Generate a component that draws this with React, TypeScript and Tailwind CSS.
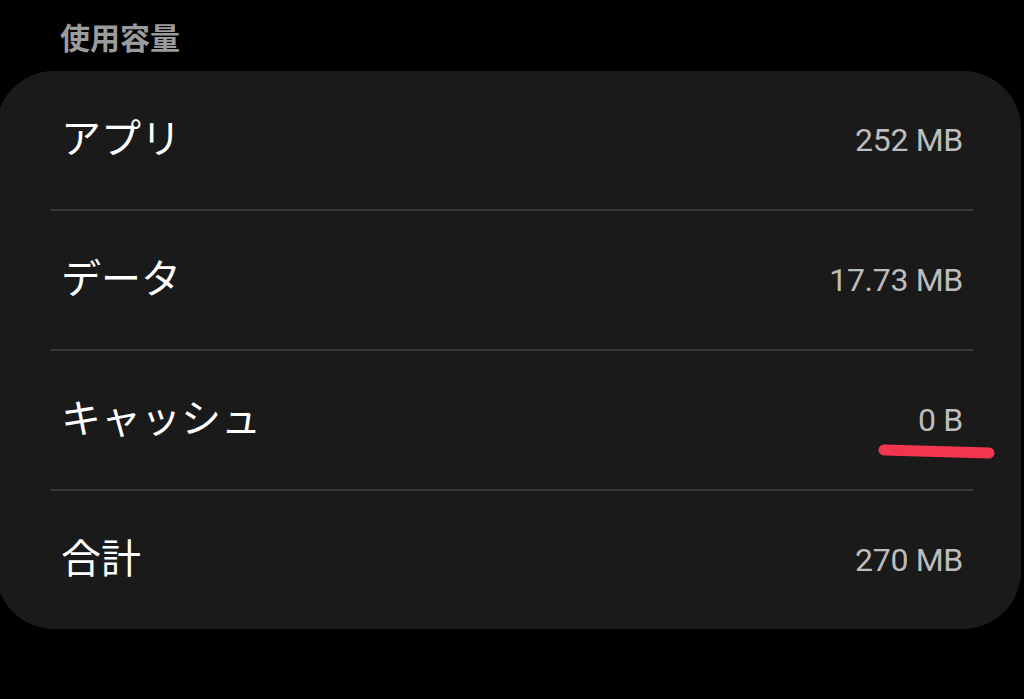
import React from 'react';

const rows = [
  { label: 'アプリ', value: '252 MB' },
  { label: 'データ', value: '17.73 MB' },
  { label: 'キャッシュ', value: '0 B', marked: true },
  { label: '合計', value: '270 MB' },
];

const jp = "font-['Noto_Sans_CJK_JP','Noto_Sans',sans-serif]";

export default function App() {
  return (
    <div className="w-[1024px] h-[699px] bg-black overflow-hidden">
      <div className={`pl-[60px] pt-[17px] h-[71px] text-[30px] leading-[38px] font-bold text-[#9b9b9b] ${jp}`}>
        使用容量
      </div>
      <div className="relative -ml-[4px] w-[1025px] rounded-[58px] bg-[#1a1a1a]">
        {rows.map((row, i) => (
          <div key={row.label}>
            {i > 0 && <div className="ml-[54px] mr-[48px] h-[2px] bg-[#3a3a3a]" />}
            <div className="relative flex h-[138px] items-center justify-between pl-[65px] pr-[58px]">
              <span className={`text-[40px] leading-none text-white -mt-[8px] ${jp}`}>{row.label}</span>
              <span className="font-['Roboto',sans-serif] text-[32px] leading-none text-[#bdbdbd] tracking-[-0.3px]">
                {row.value}
              </span>
              {row.marked && (
                <svg
                  className="absolute right-[22px] top-[93px]"
                  width="124"
                  height="20"
                  viewBox="0 0 124 20"
                >
                  <line x1="9" y1="6" x2="114" y2="9" stroke="#f2364f" strokeWidth="11" strokeLinecap="round" />
                </svg>
              )}
            </div>
          </div>
        ))}
      </div>
    </div>
  );
}
